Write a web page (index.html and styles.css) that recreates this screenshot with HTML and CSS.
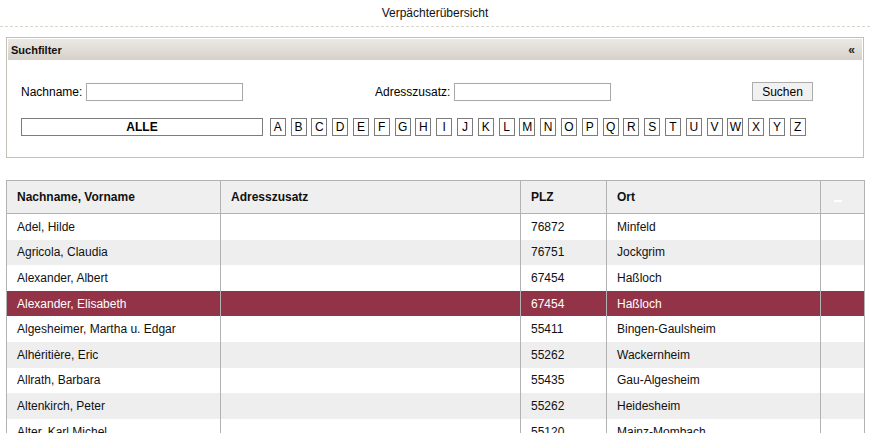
FILE: index.html
```html
<!DOCTYPE html>
<html lang="de">
<head>
<meta charset="utf-8">
<title>Verpächterübersicht</title>
<link rel="stylesheet" href="styles.css">
</head>
<body>
<div class="page">
  <div class="title">Verpächterübersicht</div>

  <div class="filter">
    <div class="filter-head">
      <span>Suchfilter</span>
      <span class="collapse">«</span>
    </div>
    <div class="filter-body">
      <div class="filter-row">
        <label class="field">Nachname: <input type="text" class="inp"></label>
        <label class="field">Adresszusatz: <input type="text" class="inp"></label>
        <div><button class="btn">Suchen</button></div>
      </div>
      <div class="letters">
        <span class="all">ALLE</span>
        <span class="letter">A</span><span class="letter">B</span><span class="letter">C</span><span class="letter">D</span><span class="letter">E</span><span class="letter">F</span><span class="letter">G</span><span class="letter">H</span><span class="letter">I</span><span class="letter">J</span><span class="letter">K</span><span class="letter">L</span><span class="letter">M</span><span class="letter">N</span><span class="letter">O</span><span class="letter">P</span><span class="letter">Q</span><span class="letter">R</span><span class="letter">S</span><span class="letter">T</span><span class="letter">U</span><span class="letter">V</span><span class="letter">W</span><span class="letter">X</span><span class="letter">Y</span><span class="letter">Z</span>
      </div>
    </div>
  </div>

  <table class="grid">
    <colgroup>
      <col class="c-name"><col class="c-addr"><col class="c-plz"><col class="c-ort"><col class="c-act">
    </colgroup>
    <thead>
      <tr><th>Nachname, Vorname</th><th>Adresszusatz</th><th>PLZ</th><th>Ort</th><th><span class="sort"></span></th></tr>
    </thead>
    <tbody>
      <tr><td>Adel, Hilde</td><td></td><td>76872</td><td>Minfeld</td><td></td></tr>
      <tr class="alt"><td>Agricola, Claudia</td><td></td><td>76751</td><td>Jockgrim</td><td></td></tr>
      <tr><td>Alexander, Albert</td><td></td><td>67454</td><td>Haßloch</td><td></td></tr>
      <tr class="sel"><td>Alexander, Elisabeth</td><td></td><td>67454</td><td>Haßloch</td><td></td></tr>
      <tr><td>Algesheimer, Martha u. Edgar</td><td></td><td>55411</td><td>Bingen-Gaulsheim</td><td></td></tr>
      <tr class="alt"><td>Alhéritière, Eric</td><td></td><td>55262</td><td>Wackernheim</td><td></td></tr>
      <tr><td>Allrath, Barbara</td><td></td><td>55435</td><td>Gau-Algesheim</td><td></td></tr>
      <tr class="alt"><td>Altenkirch, Peter</td><td></td><td>55262</td><td>Heidesheim</td><td></td></tr>
      <tr><td>Alter, Karl Michel</td><td></td><td>55120</td><td>Mainz-Mombach</td><td></td></tr>
    </tbody>
  </table>
</div>
</body>
</html>
```
FILE: styles.css
```css
html, body {
  margin: 0;
  padding: 0;
  background: #fff;
}
body {
  font-family: "Liberation Sans", Arial, Helvetica, sans-serif;
  font-size: 12px;
  color: #000;
  overflow: hidden;
}
.page {
  padding: 0 6px 0 6px;
}
.title {
  margin: 0 -6px;
  text-align: center;
  padding-top: 6px;
  line-height: 14px;
  height: 20px;
  border-bottom: 1px dashed #d8d5cb;
  color: #111;
}
.filter {
  margin-top: 10px;
  border: 1px solid #c4c0b8;
  padding: 1px;
  height: 117px;
}
.filter-head {
  height: 21px;
  background: linear-gradient(#ece9e5, #d5d0c9);
  display: flex;
  justify-content: space-between;
  align-items: center;
  padding: 0 7px 0 3px;
  font-size: 11px;
  font-weight: bold;
  color: #111;
}
.collapse {
  font-size: 12px;
  color: #222;
}
.filter-body {
  padding: 22px 0 0 13px;
}
.filter-row {
  display: grid;
  grid-template-columns: 354px 377px auto;
  align-items: center;
  height: 19px;
}
.field {
  display: flex;
  align-items: center;
  gap: 4px;
}
.inp {
  box-sizing: border-box;
  width: 157px;
  height: 18px;
  border: 1px solid #a8a8a8;
  margin: 0;
  padding: 0 2px;
  font: inherit;
}
.btn {
  box-sizing: border-box;
  width: 61px;
  height: 19px;
  border: 1px solid #acacac;
  background: #f1f1f1;
  font: inherit;
  color: #000;
  padding: 0;
  margin: 0;
}
.letters {
  display: flex;
  align-items: center;
  margin-top: 17px;
  gap: 4.8px;
}
.all, .letter {
  box-sizing: border-box;
  height: 18px;
  border: 1px solid #7c7c7c;
  display: flex;
  align-items: center;
  justify-content: center;
}
.all {
  width: 242px;
  font-weight: bold;
  margin-right: 2px;
}
.letter {
  width: 16px;
}
.grid {
  margin-top: 22px;
  width: 858px;
  border-collapse: collapse;
  table-layout: fixed;
}
.c-name { width: 214px; }
.c-addr { width: 300px; }
.c-plz { width: 86px; }
.c-ort { width: 214px; }
.c-act { width: 44px; }
.grid th, .grid td {
  border-left: 1px solid #b2b2b2;
  border-right: 1px solid #b2b2b2;
  padding: 0 10px;
  text-align: left;
  white-space: nowrap;
  overflow: hidden;
}
.grid th {
  height: 32px;
  background: #efefef;
  border-top: 1px solid #b2b2b2;
  border-bottom: 1px solid #b2b2b2;
  font-weight: bold;
  color: #111;
}
.grid td {
  height: 25.6px;
  color: #111;
}
.grid tr.alt td {
  background: #eeeeee;
}
.grid tr.sel td {
  background: #923347;
  color: #fff;
}
.sort {
  display: block;
  width: 8px;
  height: 2px;
  background: #fff;
  margin: 8px 0 0 3px;
}
```
